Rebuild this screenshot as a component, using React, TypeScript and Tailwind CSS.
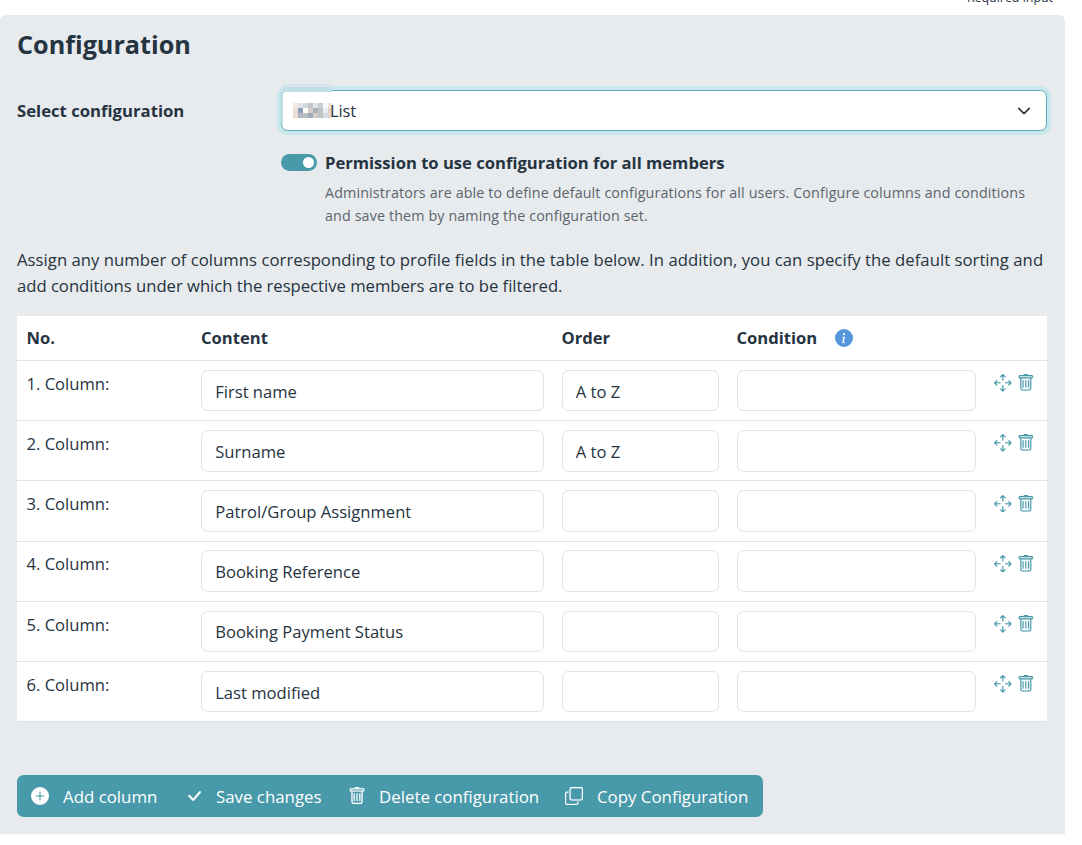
import { FC, ReactNode } from "react";
import {
  BsArrowsMove,
  BsCheckLg,
  BsCopy,
  BsInfoCircleFill,
  BsPlusCircleFill,
  BsTrash,
} from "react-icons/bs";

interface ColumnRow {
  content: string;
  order: string;
}

interface FieldProps {
  value: string;
  label: string;
}

interface ActionProps {
  icon: ReactNode;
  text: string;
  className: string;
}

const rows: ColumnRow[] = [
  { content: "First name", order: "A to Z" },
  { content: "Surname", order: "A to Z" },
  { content: "Patrol/Group Assignment", order: "" },
  { content: "Booking Reference", order: "" },
  { content: "Booking Payment Status", order: "" },
  { content: "Last modified", order: "" },
];

// Masked part of the configuration name, 5px blocks
const mosaic = [
  ["#f5ebe6", "#e1e4e8", "#d3d8de", "#c4c6ca", "#e3e6e9", "#c9ccd1", "#f8fafc", "#f0e3dc"],
  ["#ecdcd2", "#8e9eb4", "#ffffff", "#d8cdc8", "#abafb9", "#bfc5c6", "#e9eef3", "#e5d2c6"],
  ["#ecdcd2", "#b0b7c2", "#b9bdc0", "#a0acbb", "#d9cdc7", "#bec4c4", "#d2dde9", "#e5d2c6"],
];

const Field: FC<FieldProps> = ({ value, label }) => {
  return (
    <input
      className="block h-[41.6px] w-full rounded-[6.6px] border border-[#dee2e6] bg-white px-[13.2px] pt-px text-[16.6px] outline-none"
      defaultValue={value}
      aria-label={label}
    />
  );
};

const Action: FC<ActionProps> = ({ icon, text, className }) => {
  return (
    <button className={`flex items-center whitespace-nowrap ${className}`}>
      {icon}
      <span className="pt-px">{text}</span>
    </button>
  );
};

const App: FC = () => {
  return (
    <div className="h-[845px] w-[1082px] overflow-hidden bg-white font-['Open_Sans','Noto_Sans',sans-serif] text-[16.6px] text-[#263340]">
      <div className="flex h-[15px] w-[1053px] items-end justify-end overflow-hidden">
        <span className="mb-[8px] text-[12.4px] leading-[18px]">Required input</span>
      </div>
      <section className="h-[819px] w-[1065px] rounded-t-[6px] bg-[#e7ebee] px-[17px] pt-[13px]">
        <h1 className="h-[62px] text-[25.2px] leading-[33px] font-bold">
          Configuration
        </h1>
        <div className="flex">
          <label className="w-[264px] pt-[8px] text-[16.7px] leading-[26px] font-bold">
            Select configuration
          </label>
          <div className="w-[766px]">
            <div className="relative flex h-[41px] items-center rounded-[6.6px] border border-[#5eacba] bg-white pr-[15px] pl-[11px] ring-4 ring-[#c9e7ed]">
              {/* mask over the corner of the focused select */}
              <span className="absolute -top-[7px] left-px h-[3px] w-[49px] bg-[#d8e6eb]" />
              <span className="absolute -top-[4px] left-px h-[5px] w-[49px] bg-[#bfe0e7]" />
              <span className="absolute top-px -left-[2px] h-[33px] w-[3px] bg-[#bbdce3]" />
              <div className="grid h-[15px] w-[39px] grid-cols-[repeat(7,5px)_4px]">
                {mosaic.flat().map((color, i) => (
                  <span key={i} className="h-[5px]" style={{ backgroundColor: color }} />
                ))}
              </div>
              <span className="-ml-[2px] flex-1 pt-[2px] tracking-[-0.15px]">List</span>
              <svg width="14" height="14" viewBox="0 0 16 16" fill="none" stroke="#343a40" strokeWidth="2" strokeLinecap="round" strokeLinejoin="round">
                <path d="m2 5 6 6 6-6" />
              </svg>
            </div>
            <div className="mt-[18px] flex">
              <span className="mt-[5px] flex h-[17px] w-[36px] shrink-0 items-center justify-end rounded-full bg-[#4899aa] pr-[3px]">
                <span className="h-[11px] w-[11px] rounded-full bg-white" />
              </span>
              <div className="pt-px pl-[8px] whitespace-nowrap">
                <p className="leading-[26px] font-bold">
                  Permission to use configuration for all members
                </p>
                <p className="mt-[5px] text-[14.3px] leading-[23px] tracking-[0.124px] text-[#5c646c]">
                  Administrators are able to define default configurations for all users. Configure columns and conditions
                  <br />
                  and save them by naming the configuration set.
                </p>
              </div>
            </div>
          </div>
        </div>
        <p className="mt-[20px] text-[16.7px] leading-[26.4px] whitespace-nowrap">
          <span className="tracking-[0.03px]">
            Assign any number of columns corresponding to profile fields in the table below. In addition, you can specify the default sorting and
          </span>
          <br />
          <span className="tracking-[-0.03px]">
            add conditions under which the respective members are to be filtered.
          </span>
        </p>
        <div className="mt-[16.2px] w-[1030px] bg-white">
          <div className="grid h-[45px] grid-cols-[175px_360.5px_175px_257px_62.5px] items-center border-b border-[#dee2e6] font-bold">
            <span className="pt-px pl-[9.5px]">No.</span>
            <span className="pt-px pl-[9px]">Content</span>
            <span className="pt-px pl-[9px]">Order</span>
            <span className="flex items-center pl-[9px]">
              <span className="pt-px">Condition</span>
              <BsInfoCircleFill className="ml-[18px] text-[18px] text-[#5596dd]" />
            </span>
          </div>
          {rows.map((row, i) => (
            <div
              key={row.content}
              className="grid h-[60.2px] grid-cols-[175px_360.5px_175px_257px_62.5px] border-b border-[#dee2e6] pt-[8.8px]"
            >
              <span className="pl-[9.5px] leading-[27px]">{i + 1}. Column:</span>
              <div className="px-[9px]">
                <Field value={row.content} label="Content" />
              </div>
              <div className="px-[9px]">
                <Field value={row.order} label="Order" />
              </div>
              <div className="px-[9px]">
                <Field value="" label="Condition" />
              </div>
              <div className="flex gap-[5px] pt-[4.4px] pl-[9.5px] text-[17.6px] text-[#4899aa]">
                <BsArrowsMove strokeWidth="0.1" />
                <BsTrash strokeWidth="0.1" />
              </div>
            </div>
          ))}
        </div>
        <div className="mt-[53px] flex h-[42px] w-[746px] rounded-[6.6px] bg-[#4899aa] text-[16.85px] text-white">
          <Action icon={<BsPlusCircleFill className="mr-[14px] text-[18px]" />} text="Add column" className="w-[168px] pl-[14px]" />
          <Action icon={<BsCheckLg strokeWidth="0.5" className="mr-[13px] text-[18px]" />} text="Save changes" className="w-[163px]" />
          <Action icon={<BsTrash strokeWidth="0.2" className="mr-[13px] text-[18px]" />} text="Delete configuration" className="w-[217px]" />
          <Action icon={<BsCopy strokeWidth="0.2" className="mr-[14px] text-[18px]" />} text="Copy Configuration" className="w-[198px]" />
        </div>
      </section>
    </div>
  );
};

export default App;
